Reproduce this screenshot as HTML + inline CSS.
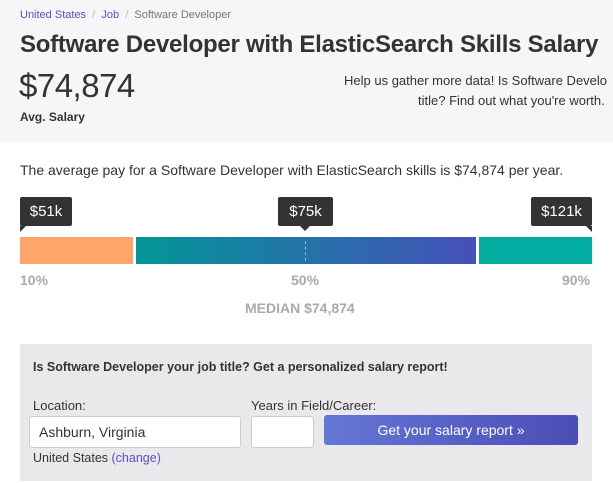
<!DOCTYPE html>
<html><head><style>
*{margin:0;padding:0;box-sizing:border-box}
body{width:613px;height:483px;overflow:hidden;background:#fff;font-family:"Liberation Sans",sans-serif;color:#333;position:relative}
.a{position:absolute;white-space:nowrap}
.tip{position:absolute;top:197px;height:29px;background:#333;color:#fff;font-size:15px;line-height:29px;text-align:center;border-radius:2px}
.ar{position:absolute;top:29px;width:0;height:0}
.lbl{position:absolute;top:272px;font-size:14px;font-weight:bold;color:#a9a9b1}
</style></head><body>
<div class="a" style="left:0;top:0;width:613px;height:142px;background:#f5f6f8"></div>
<div class="a" style="left:20px;top:9px;font-size:11px;color:#777"><span style="color:#5b4fd1">United States</span> <span style="color:#bbb">&nbsp;/&nbsp;</span> <span style="color:#5b4fd1">Job</span> <span style="color:#bbb">&nbsp;/&nbsp;</span> Software Developer</div>
<div class="a" style="left:20px;top:31px;font-size:24px;font-weight:bold;color:#333;letter-spacing:-0.25px">Software Developer with ElasticSearch Skills Salary</div>
<div class="a" style="left:19px;top:67px;font-size:33px;color:#333;letter-spacing:-0.5px">$74,874</div>
<div class="a" style="left:20px;top:110px;font-size:12px;font-weight:bold">Avg. Salary</div>
<div class="a" style="left:344px;top:73px;font-size:13px;color:#333">Help us gather more data! Is Software Develo</div>
<div class="a" style="left:418px;top:93px;font-size:13px;color:#333">title? Find out what you're worth.</div>
<div class="a" style="left:20px;top:162px;font-size:14px;color:#333">The average pay for a Software Developer with ElasticSearch skills is $74,874 per year.</div>
<div class="tip" style="left:20px;width:52px">$51k<div class="ar" style="left:0;border-top:6px solid #333;border-right:6px solid transparent"></div></div>
<div class="tip" style="left:278px;width:55px">$75k<div class="ar" style="left:22px;border-top:5px solid #333;border-left:5px solid transparent;border-right:5px solid transparent"></div></div>
<div class="tip" style="left:531px;width:61px">$121k<div class="ar" style="right:0;border-top:6px solid #333;border-left:6px solid transparent"></div></div>
<div class="a" style="left:20px;top:237px;width:113px;height:27px;background:#fea66a"></div>
<div class="a" style="left:136px;top:237px;width:340px;height:27px;background:linear-gradient(90deg,#029698,#4650b9)"></div>
<div class="a" style="left:305px;top:241px;height:20px;border-left:1px dashed rgba(255,255,255,.5)"></div>
<div class="a" style="left:479px;top:237px;width:113px;height:27px;background:#00ada0"></div>
<div class="lbl" style="left:20px">10%</div>
<div class="lbl" style="left:291px">50%</div>
<div class="lbl" style="left:562px">90%</div>
<div class="a" style="left:245px;top:300px;font-size:14px;font-weight:bold;color:#a9a9b1">MEDIAN $74,874</div>
<div class="a" style="left:20px;top:344px;width:572px;height:137px;background:#e9e9eb"></div>
<div class="a" style="left:33px;top:360px;font-size:12.5px;font-weight:bold;color:#333">Is Software Developer your job title? Get a personalized salary report!</div>
<div class="a" style="left:33px;top:398px;font-size:13px">Location:</div>
<div class="a" style="left:251px;top:398px;font-size:13px">Years in Field/Career:</div>
<div class="a" style="left:29px;top:416px;width:212px;height:32px;background:#fff;border:1px solid #ccc;border-radius:3px;font-size:14px;line-height:30px;padding-left:9px">Ashburn, Virginia</div>
<div class="a" style="left:251px;top:416px;width:63px;height:32px;background:#fff;border:1px solid #ccc;border-radius:3px"></div>
<div class="a" style="left:324px;top:415px;width:254px;height:30px;background:linear-gradient(90deg,#6477d6,#4a4db6);border-radius:3px;color:#fff;font-size:14px;line-height:30px;text-align:center">Get your salary report »</div>
<div class="a" style="left:33px;top:451px;font-size:12.5px">United States <span style="color:#5b4fd1">(change)</span></div>
</body></html>
